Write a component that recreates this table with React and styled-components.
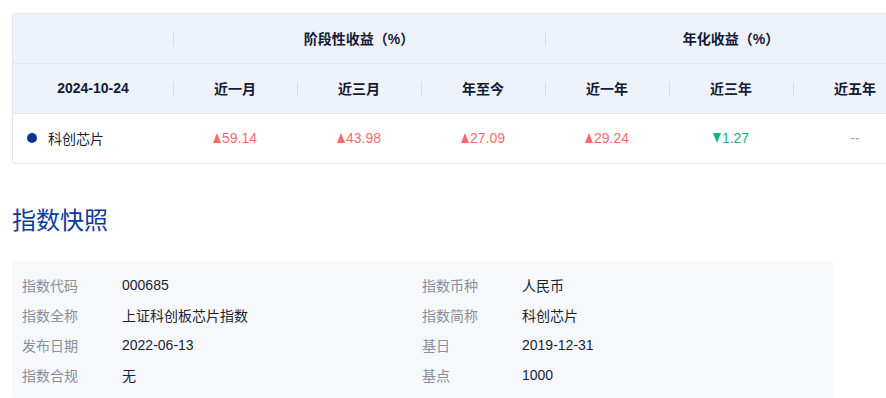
import React from "react";
import styled, { createGlobalStyle } from "styled-components";

const GlobalStyle = createGlobalStyle`
  body {
    margin: 0;
    background: #fff;
    overflow: hidden;
    font-family: "Liberation Sans", "Noto Sans CJK SC", sans-serif;
    color: #1a1f36;
  }
`;

const columns = ["近一月", "近三月", "年至今", "近一年", "近三年", "近五年"];
const returns = [
  { value: "59.14", dir: "up" },
  { value: "43.98", dir: "up" },
  { value: "27.09", dir: "up" },
  { value: "29.24", dir: "up" },
  { value: "1.27", dir: "down" },
  { value: null },
];

const info = [
  ["指数代码", "000685", "指数币种", "人民币"],
  ["指数全称", "上证科创板芯片指数", "指数简称", "科创芯片"],
  ["发布日期", "2022-06-13", "基日", "2019-12-31"],
  ["指数合规", "无", "基点", "1000"],
];

export default function App() {
  return (
    <>
      <GlobalStyle />
      <Page>
        <Card>
          <HeadRow>
            <Cell />
            <GroupCell $span={3} $divider>阶段性收益（%）</GroupCell>
            <GroupCell $span={3} $divider>年化收益（%）</GroupCell>
          </HeadRow>
          <HeadRow>
            <Cell>2024-10-24</Cell>
            {columns.map((c) => (
              <Cell key={c} $divider>{c}</Cell>
            ))}
          </HeadRow>
          <DataRow>
            <NameCell>
              <Dot />
              科创芯片
            </NameCell>
            {returns.map((r, i) => (
              <ValueCell key={i} $dir={r.dir}>
                {r.value ? (
                  <>
                    <Arrow $dir={r.dir} />
                    {r.value}
                  </>
                ) : (
                  <Dash>--</Dash>
                )}
              </ValueCell>
            ))}
          </DataRow>
        </Card>

        <Title>指数快照</Title>

        <Panel>
          {info.map((row) => (
            <InfoRow key={row[0]}>
              <Label>{row[0]}</Label>
              <Value>{row[1]}</Value>
              <Label>{row[2]}</Label>
              <Value>{row[3]}</Value>
            </InfoRow>
          ))}
        </Panel>
      </Page>
    </>
  );
}

const Page = styled.div`
  padding: 13px 0 0 12px;
`;

const Card = styled.div`
  width: 920px;
  border: 1px solid #e2e5eb;
  border-right: none;
  border-radius: 4px 0 0 4px;
  overflow: hidden;
`;

const HeadRow = styled.div`
  display: grid;
  grid-template-columns: 160px repeat(6, 124px);
  height: 49px;
  background: #eef2fb;
  border-bottom: 1px solid #e2e6ee;
  font-size: 14px;
  font-weight: 700;
  color: #121a36;
`;

const Cell = styled.div`
  position: relative;
  display: flex;
  align-items: center;
  justify-content: center;
  padding-bottom: 1px;

  &::before {
    content: "";
    display: ${(p) => (p.$divider ? "block" : "none")};
    position: absolute;
    left: 0;
    top: 50%;
    width: 1px;
    height: 14px;
    margin-top: -7px;
    background: #d9dde6;
  }
`;

const GroupCell = styled(Cell)`
  grid-column: span ${(p) => p.$span};
`;

const DataRow = styled.div`
  display: grid;
  grid-template-columns: 160px repeat(6, 124px);
  height: 49px;
  background: #fff;
  font-size: 14px;
`;

const NameCell = styled.div`
  display: flex;
  align-items: center;
  padding: 0 0 2px 14px;
  gap: 11px;
  color: #1a1f36;
`;

const Dot = styled.span`
  width: 10px;
  height: 10px;
  border-radius: 50%;
  background: #0b3493;
`;

const ValueCell = styled.div`
  display: flex;
  align-items: center;
  justify-content: center;
  padding-bottom: 2px;
  color: ${(p) => (p.$dir === "down" ? "#13b08a" : "#f96b6b")};
`;

const Arrow = styled.span`
  width: 0;
  height: 0;
  margin-right: 1px;
  border-left: 4.5px solid transparent;
  border-right: 4.5px solid transparent;
  ${(p) =>
    p.$dir === "down"
      ? "border-top: 10px solid #13b08a;"
      : "border-bottom: 10px solid #f96b6b;"}
`;

const Dash = styled.span`
  color: #9aa0aa;
`;

const Title = styled.h2`
  margin: 38px 0 0;
  height: 59px;
  font-size: 24px;
  font-weight: 400;
  line-height: 34px;
  color: #0c3a9e;
  font-family: "Noto Sans CJK SC", sans-serif;
`;

const Panel = styled.div`
  width: 802px;
  padding: 9px 10px;
  background: #f7f8fc;
  border-radius: 4px;
`;

const InfoRow = styled.div`
  display: grid;
  grid-template-columns: 100px 300px 100px 1fr;
  height: 30px;
  align-items: center;
  font-size: 14px;
`;

const Label = styled.span`
  color: #8a8f9a;
`;

const Value = styled.span`
  color: #1a1f36;
`;
